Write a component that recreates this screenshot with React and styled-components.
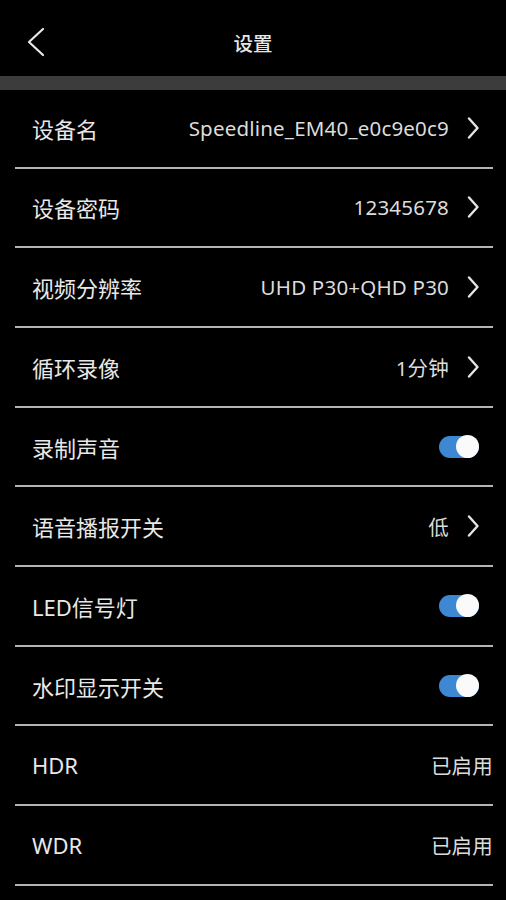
import React from "react";
import styled, { createGlobalStyle } from "styled-components";

const Global = createGlobalStyle`
  html, body { margin: 0; padding: 0; background: #000; }
  body { font-family: "Noto Sans", "Noto Sans CJK SC", sans-serif; }
`;

const Page = styled.div`
  width: 506px;
  height: 900px;
  background: #000;
  overflow: hidden;
  display: flex;
  flex-direction: column;
`;

const Header = styled.header`
  box-sizing: border-box;
  height: 76px;
  padding-top: 8px;
  display: grid;
  grid-template-columns: 76px 1fr 76px;
  align-items: center;
`;

const BackButton = styled.button`
  background: none;
  border: none;
  padding: 0 0 0 26px;
  height: 100%;
  display: flex;
  align-items: center;
  cursor: pointer;
`;

const Title = styled.h1`
  margin: 0;
  text-align: center;
  font-size: 19.5px;
  font-weight: 500;
  color: #e6e6e6;
`;

const Band = styled.div`
  height: 14px;
  background: #3c3c3c;
`;

const List = styled.ul`
  list-style: none;
  margin: 0;
  padding: 0 13px 0 15px;
`;

const Row = styled.li`
  box-sizing: border-box;
  height: ${(p) => (p.$first ? "78.6px" : "79.7px")};
  border-bottom: 2px solid #b4b4b4;
  display: flex;
  align-items: center;
  justify-content: space-between;
  padding: 0 ${(p) => p.$pad}px 0 17px;
`;

const Label = styled.span`
  font-size: 22px;
  color: #e8e8e8;
`;

const Right = styled.div`
  display: flex;
  align-items: center;
  gap: 18px;
`;

const Value = styled.span`
  font-size: 20.5px;
  letter-spacing: 0.2px;
  color: #dcdcdc;
`;

const Toggle = styled.div`
  width: 40px;
  height: 22px;
  border-radius: 11px;
  background: #3e87d3;
  position: relative;
  &::after {
    content: "";
    position: absolute;
    right: 0;
    top: -0.5px;
    width: 23px;
    height: 23px;
    border-radius: 50%;
    background: #fafafa;
  }
`;

const Chevron = () => (
  <svg width="12" height="22" viewBox="0 0 12 22">
    <path d="M2 1.5 L10.5 11 L2 20.5" fill="none" stroke="#e4e4e4" strokeWidth="2.4" strokeLinecap="round" strokeLinejoin="round" />
  </svg>
);

const BackIcon = () => (
  <svg width="20" height="30" viewBox="0 0 20 30">
    <path d="M17 2 L3 15 L17 28" fill="none" stroke="#e8e8e8" strokeWidth="2.2" strokeLinecap="round" strokeLinejoin="round" />
  </svg>
);

const rows = [
  { label: "设备名", value: "Speedline_EM40_e0c9e0c9", type: "link" },
  { label: "设备密码", value: "12345678", type: "link" },
  { label: "视频分辨率", value: "UHD P30+QHD P30", type: "link" },
  { label: "循环录像", value: "1分钟", type: "link" },
  { label: "录制声音", type: "toggle" },
  { label: "语音播报开关", value: "低", type: "link" },
  { label: "LED信号灯", type: "toggle" },
  { label: "水印显示开关", type: "toggle" },
  { label: "HDR", value: "已启用", type: "text" },
  { label: "WDR", value: "已启用", type: "text" },
];

export default function App() {
  return (
    <Page>
      <Global />
      <Header>
        <BackButton aria-label="返回">
          <BackIcon />
        </BackButton>
        <Title>设置</Title>
        <span />
      </Header>
      <Band />
      <List>
        {rows.map((r, i) => (
          <Row key={r.label} $first={i === 0} $pad={r.type === "text" ? 0 : 14}>
            <Label>{r.label}</Label>
            <Right>
              {r.type === "toggle" ? (
                <Toggle />
              ) : (
                <>
                  <Value>{r.value}</Value>
                  {r.type === "link" && <Chevron />}
                </>
              )}
            </Right>
          </Row>
        ))}
      </List>
    </Page>
  );
}
